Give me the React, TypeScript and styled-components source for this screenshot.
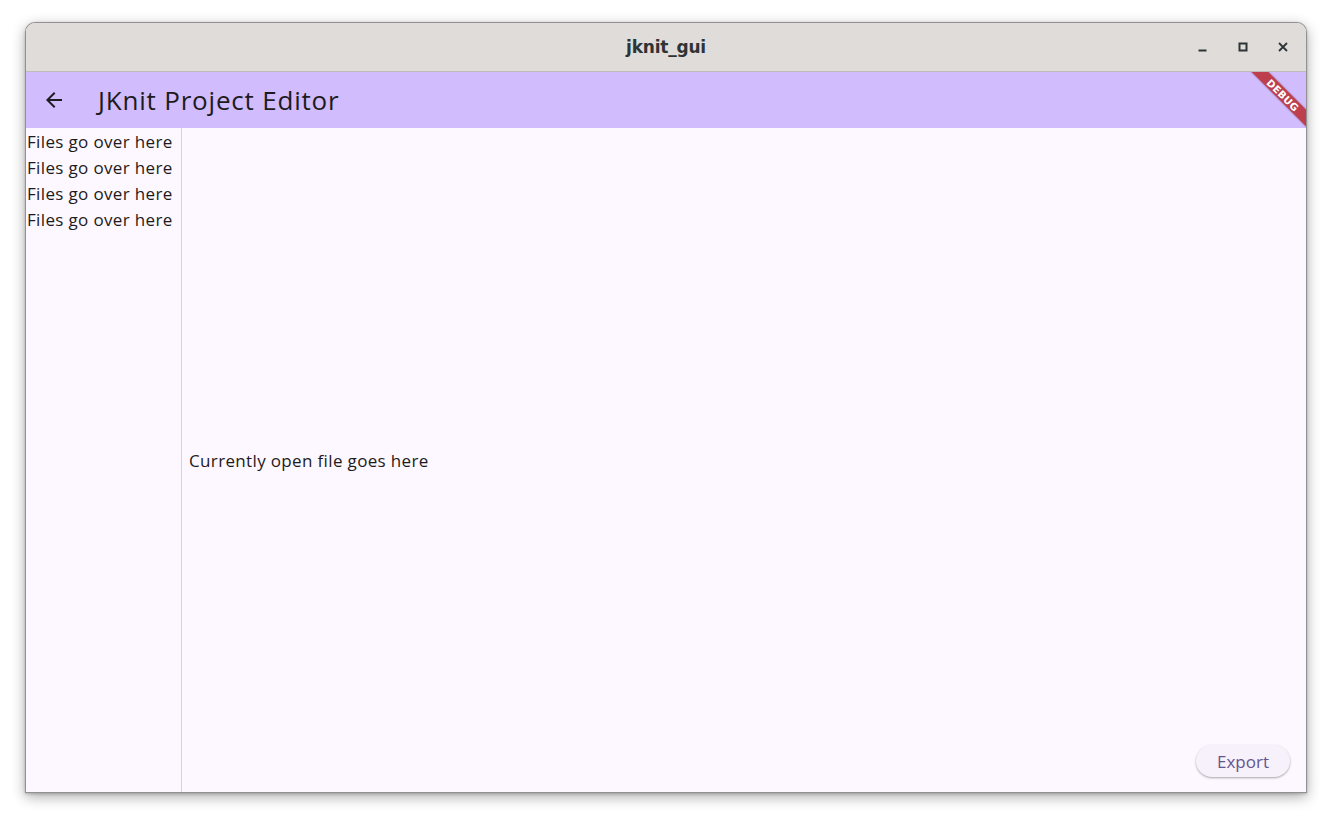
import React from "react";
import styled, { createGlobalStyle } from "styled-components";

const Global = createGlobalStyle`
  html, body { margin: 0; padding: 0; background: #ffffff; }
  body { width: 1332px; height: 821px; overflow: hidden; }
  * { box-sizing: border-box; }
`;

const Desktop = styled.div`
  width: 1332px;
  height: 821px;
  padding: 22px 0 0 25px;
  background: #ffffff;
`;

const Window = styled.div`
  width: 1282px;
  height: 771px;
  display: flex;
  flex-direction: column;
  border: 1px solid rgba(0, 0, 0, 0.42);
  border-radius: 10px 10px 0 0;
  overflow: hidden;
  box-shadow: 0 4px 14px rgba(0, 0, 0, 0.32), 0 1px 3px rgba(0, 0, 0, 0.2);
  background: #fdf7ff;
`;

const TitleBar = styled.div`
  height: 49px;
  flex: none;
  display: grid;
  grid-template-columns: 1fr auto 1fr;
  align-items: center;
  background: #dfdcd9;
  border-bottom: 1px solid #bfbcb8;
`;

const WindowTitle = styled.div`
  grid-column: 2;
  font-family: "DejaVu Sans", "Liberation Sans", sans-serif;
  font-weight: bold;
  font-size: 17px;
  letter-spacing: -0.2px;
  color: #2e3436;
`;

const Controls = styled.div`
  grid-column: 3;
  justify-self: end;
  display: flex;
  align-items: center;
  gap: 16px;
  padding-right: 11px;
`;

const ControlButton = styled.div`
  width: 24px;
  height: 24px;
  display: flex;
  align-items: center;
  justify-content: center;
  color: #2e3436;
`;

const Surface = styled.div`
  position: relative;
  flex: 1;
  display: flex;
  flex-direction: column;
  overflow: hidden;
`;

const AppBar = styled.div`
  height: 56px;
  flex: none;
  display: flex;
  align-items: center;
  background: #d1bcfd;
`;

const Leading = styled.div`
  width: 56px;
  height: 56px;
  display: flex;
  align-items: center;
  justify-content: center;
  color: #1d1b20;
`;

const AppTitle = styled.div`
  margin-left: 16px;
  font-family: "Open Sans", "Noto Sans", sans-serif;
  font-size: 26px;
  color: #1d1b20;
  letter-spacing: 0.8px;
`;

const Body = styled.div`
  flex: 1;
  display: flex;
  min-height: 0;
`;

const Sidebar = styled.div`
  width: 156px;
  flex: none;
  display: flex;
  flex-direction: column;
  padding-top: 1px;
  border-right: 1px solid #d9d3dc;
`;

const FileItem = styled.div`
  padding-left: 1px;
  font-family: "Open Sans", "Noto Sans", sans-serif;
  font-size: 17px;
  line-height: 26px;
  letter-spacing: 0.35px;
  color: #1d1b20;
  white-space: nowrap;
`;

const Main = styled.div`
  position: relative;
  flex: 1;
  display: flex;
  align-items: center;
  padding-left: 7px;
`;

const MainText = styled.div`
  font-family: "Open Sans", "Noto Sans", sans-serif;
  font-size: 17px;
  letter-spacing: 0.35px;
  color: #1d1b20;
`;

const ExportButton = styled.button`
  position: absolute;
  right: 16px;
  bottom: 15px;
  height: 32px;
  padding: 0 21px;
  border: none;
  border-radius: 16px;
  background: #f7f1fb;
  box-shadow: 0 1px 2px rgba(0, 0, 0, 0.25), 0 1px 3px rgba(0, 0, 0, 0.1);
  font-family: "Open Sans", "Noto Sans", sans-serif;
  font-size: 17px;
  color: #65558f;
`;

const Banner = styled.div`
  position: absolute;
  top: 17px;
  right: -27px;
  width: 100px;
  height: 12px;
  transform: rotate(45deg);
  background: rgba(183, 28, 28, 0.78);
  box-shadow: 0 0 2px rgba(0, 0, 0, 0.3);
  display: flex;
  align-items: center;
  justify-content: center;
  font-family: "DejaVu Sans", sans-serif;
  font-weight: bold;
  font-size: 10px;
  letter-spacing: 0.3px;
  color: #ffffff;
`;

export default function App() {
  return (
    <>
      <Global />
      <Desktop>
        <Window>
          <TitleBar>
            <WindowTitle>jknit_gui</WindowTitle>
            <Controls>
              <ControlButton>
                <svg width="10" height="10" viewBox="0 0 10 10">
                  <rect x="0.5" y="7.5" width="8" height="2" fill="currentColor" />
                </svg>
              </ControlButton>
              <ControlButton>
                <svg width="10" height="10" viewBox="0 0 10 10">
                  <rect x="1.5" y="1.5" width="7" height="7" fill="none" stroke="currentColor" strokeWidth="2" />
                </svg>
              </ControlButton>
              <ControlButton>
                <svg width="10" height="10" viewBox="0 0 10 10">
                  <path d="M1 1 L9 9 M9 1 L1 9" stroke="currentColor" strokeWidth="1.8" />
                </svg>
              </ControlButton>
            </Controls>
          </TitleBar>
          <Surface>
            <AppBar>
              <Leading>
                <svg width="24" height="24" viewBox="0 0 24 24">
                  <path d="M20 11H7.83l5.59-5.59L12 4l-8 8 8 8 1.41-1.41L7.83 13H20v-2z" fill="currentColor" />
                </svg>
              </Leading>
              <AppTitle>JKnit Project Editor</AppTitle>
            </AppBar>
            <Body>
              <Sidebar>
                {[0, 1, 2, 3].map((i) => (
                  <FileItem key={i}>Files go over here</FileItem>
                ))}
              </Sidebar>
              <Main>
                <MainText>Currently open file goes here</MainText>
                <ExportButton>Export</ExportButton>
              </Main>
            </Body>
            <Banner>DEBUG</Banner>
          </Surface>
        </Window>
      </Desktop>
    </>
  );
}
